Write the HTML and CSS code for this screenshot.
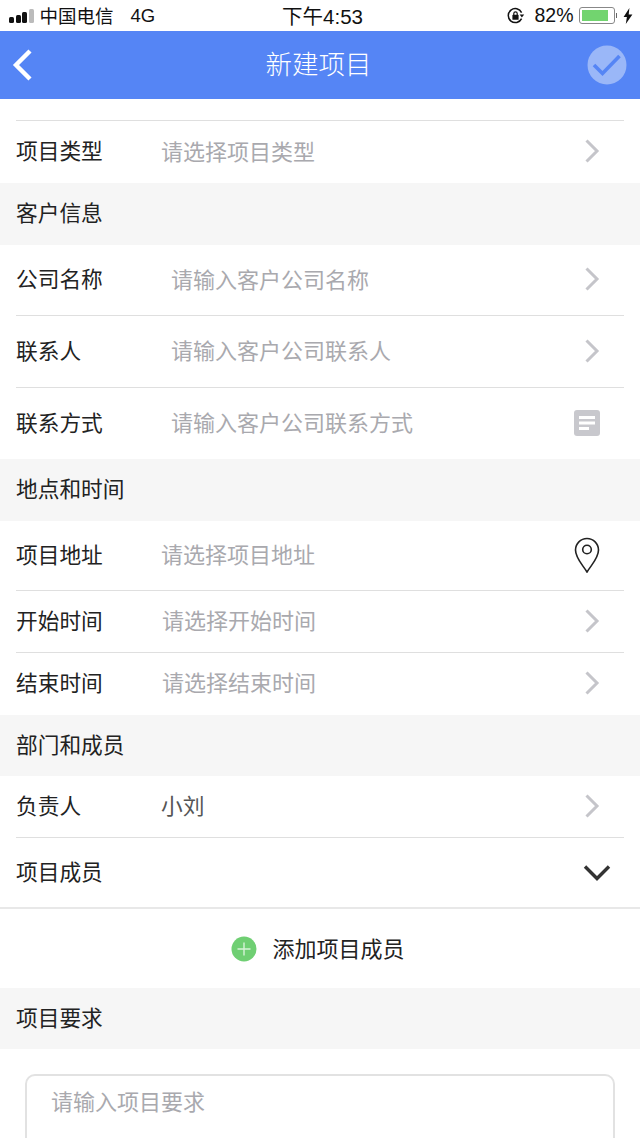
FILE: index.html
```html
<!DOCTYPE html>
<html lang="zh-CN">
	<head>
		<title>新建项目</title>
		<meta charset="UTF-8">
		<meta content="width=device-width,initial-scale=1.0" name="viewport">
		<link rel="stylesheet" href="styles.css">
	</head>
	<body>
		<div class="phone">
			<div class="statusBar">
				<div class="statusLeft">
					<span class="signal"><i class="s1"></i><i class="s2"></i><i class="s3"></i><i class="s4"></i></span>
					<span class="carrier">中国电信</span>
					<span class="net">4G</span>
				</div>
				<div class="statusTime">下午4:53</div>
				<div class="statusRight">
					<svg class="lockIcon" viewBox="0 0 18 18" width="18" height="18"><path d="M14.6 11.6A7 7 0 1 1 14.6 5.6" fill="none" stroke="#111" stroke-width="1.5"/><path d="M12.6 7.6h4.6l-2.3 2.8z" fill="#111"/><rect x="5.4" y="7.8" width="6.2" height="5" rx="0.6" fill="#111"/><path d="M6.8 8V6.6a1.7 1.7 0 0 1 3.4 0V8" fill="none" stroke="#111" stroke-width="1.2"/></svg>
					<span class="pct">82%</span>
					<span class="battery"><span class="batteryFill"></span></span>
					<span class="batteryTip"></span>
					<svg class="boltIcon" viewBox="0 0 10 16" width="10" height="16"><path d="M6.4 0 0.6 9h3.3L2.8 16 9.4 6.4H5.7z" fill="#111"/></svg>
				</div>
			</div>

			<div class="header">
				<svg class="backIcon" viewBox="0 0 24 36" width="24" height="36"><path d="M19 4 5 18l14 14" fill="none" stroke="#fff" stroke-width="4.4"/></svg>
				<div class="headerTitle">新建项目</div>
				<svg class="okIcon" viewBox="0 0 40 40" width="40" height="40"><circle cx="20" cy="20" r="19.5" fill="#9ab7f8"/><path d="M7 20l8.500 8.500L32.500 11" fill="none" stroke="#5585f5" stroke-width="3.600"/></svg>
			</div>

			<div class="topGap"></div>
			<div class="row rowH61 firstRow">
				<span class="label">项目类型</span>
				<span class="value hint">请选择项目类型</span>
				<svg class="arrow" viewBox="0 0 16 26" width="16" height="26"><path d="M2.5 2.5 13 13 2.5 23.500" fill="none" stroke="#c5c5ca" stroke-width="3"/></svg>
			</div>

			<div class="section">客户信息</div>
			<div class="row rowLine rowH71">
				<span class="label">公司名称</span>
				<span class="value hint wide">请输入客户公司名称</span>
				<svg class="arrow" viewBox="0 0 16 26" width="16" height="26"><path d="M2.5 2.5 13 13 2.5 23.500" fill="none" stroke="#c5c5ca" stroke-width="3"/></svg>
			</div>
			<div class="row rowLine rowH71">
				<span class="label">联系人</span>
				<span class="value hint wide">请输入客户公司联系人</span>
				<svg class="arrow" viewBox="0 0 16 26" width="16" height="26"><path d="M2.5 2.5 13 13 2.5 23.500" fill="none" stroke="#c5c5ca" stroke-width="3"/></svg>
			</div>
			<div class="row rowH71">
				<span class="label">联系方式</span>
				<span class="value hint wide">请输入客户公司联系方式</span>
				<svg class="noteIcon" viewBox="0 0 26 26" width="26" height="26"><rect width="26" height="26" rx="3" fill="#c8c8cd"/><path d="M5 7.500h16M5 13h16M5 18.500h10" stroke="#fff" stroke-width="3"/></svg>
			</div>

			<div class="section">地点和时间</div>
			<div class="row rowLine rowH70">
				<span class="label">项目地址</span>
				<span class="value hint">请选择项目地址</span>
				<svg class="pinIcon" viewBox="0 0 26 36" width="26" height="36"><path d="M13 35C8 27 1.500 21 1.500 13a11.500 11.500 0 0 1 23 0C24.500 21 18 27 13 35z" fill="none" stroke="#222" stroke-width="1.600"/><circle cx="13" cy="12.500" r="4.300" fill="none" stroke="#222" stroke-width="1.600"/></svg>
			</div>
			<div class="row rowLine rowH62">
				<span class="label">开始时间</span>
				<span class="value hint shift">请选择开始时间</span>
				<svg class="arrow" viewBox="0 0 16 26" width="16" height="26"><path d="M2.5 2.5 13 13 2.5 23.500" fill="none" stroke="#c5c5ca" stroke-width="3"/></svg>
			</div>
			<div class="row rowH62">
				<span class="label">结束时间</span>
				<span class="value hint shift">请选择结束时间</span>
				<svg class="arrow" viewBox="0 0 16 26" width="16" height="26"><path d="M2.5 2.5 13 13 2.5 23.500" fill="none" stroke="#c5c5ca" stroke-width="3"/></svg>
			</div>

			<div class="section">部门和成员</div>
			<div class="row rowLine rowH62">
				<span class="label">负责人</span>
				<span class="value filled">小刘</span>
				<svg class="arrow" viewBox="0 0 16 26" width="16" height="26"><path d="M2.5 2.5 13 13 2.5 23.500" fill="none" stroke="#c5c5ca" stroke-width="3"/></svg>
			</div>
			<div class="row rowFull">
				<span class="label">项目成员</span>
				<svg class="chevronDown" viewBox="0 0 28 18" width="28" height="18"><path d="M2 2.500 14 14.500 26 2.500" fill="none" stroke="#333" stroke-width="3.400"/></svg>
			</div>
			<div class="addRow">
				<svg class="plusIcon" viewBox="0 0 26 26" width="26" height="26"><circle cx="13" cy="13" r="12.500" fill="#6fcf73"/><path d="M13 6.500v13M6.500 13h13" stroke="#d6f3d7" stroke-width="1.400"/></svg>
				<span class="addText">添加项目成员</span>
			</div>

			<div class="section lastSection">项目要求</div>
			<div class="reqWrap">
				<div class="reqBox">请输入项目要求</div>
			</div>
		</div>
	</body>
</html>
```

FILE: styles.css
```css
html,body{margin:0;padding:0;background:#fff;}
body{font-family:"Noto Sans CJK SC","Liberation Sans",sans-serif;color:#222;}
.phone{width:640px;height:1138px;overflow:hidden;}

.statusBar{height:31px;display:flex;align-items:center;justify-content:space-between;font-family:"Liberation Sans","Noto Sans CJK SC",sans-serif;font-size:18.500px;color:#111;padding:0 7px 0 9px;box-sizing:border-box;}
.statusLeft{display:flex;align-items:center;width:200px;}
.signal{display:flex;align-items:flex-end;gap:1.500px;margin-right:6px;}
.signal i{display:block;width:5px;background:#111;border-radius:1.500px;}
.signal .s1{height:6px;}
.signal .s2{height:8px;}
.signal .s3{height:11px;}
.signal .s4{height:14px;background:#bbb;}
.carrier{margin-bottom:1px;}
.net{margin-left:17px;}
.statusTime{font-size:20.500px;margin:0 0 1px 3px;}
.statusRight{display:flex;align-items:center;width:200px;justify-content:flex-end;}
.lockIcon{margin-right:9px;}
.pct{font-size:19.500px;margin-right:5px;}
.battery{display:block;width:36px;height:17px;border:1px solid #888;border-radius:3px;padding:2px;box-sizing:border-box;}
.batteryFill{display:block;width:26px;height:100%;background:#72d46f;}
.batteryTip{display:block;width:1.500px;height:5px;background:#666;margin:0 6px 0 1px;}

.header{height:68px;background:#5585f5;display:flex;align-items:center;justify-content:space-between;padding:0 13px 0 11px;}
.headerTitle{font-size:26.500px;line-height:36px;color:#fff;font-weight:300;margin:0 0 5px 15px;}

.topGap{height:21px;}
.row{display:flex;align-items:center;padding:0 16px;box-sizing:border-box;position:relative;font-size:21.700px;}
.rowLine::after{content:"";position:absolute;left:16px;right:16px;bottom:0;height:1px;background:#dfdfdf;}
.firstRow{border-top:1px solid #dfdfdf;margin:0 16px;padding:0;}
.rowH61{height:63px;}
.rowH70{height:70px;}
.rowH71{height:71.670px;}
.rowH62{height:62px;}
.rowFull{height:71px;border-bottom:2px solid #e8e8e8;justify-content:space-between;padding-right:29px;}

.label{width:145px;flex:none;color:#222;margin-bottom:5px;}
.value{flex:1;margin-bottom:5px;}
.hint{color:#a9a9ae;font-size:22px;}
.wide{padding-left:10px;}
.shift{padding-left:1px;}
.filled{color:#555;}
.arrow{margin:0 24px 2px 0;}
.noteIcon{margin:0 24px 1px 0;}
.pinIcon{margin:0 24px 2px 0;}

.section{height:61.500px;background:#f6f6f6;display:flex;align-items:center;padding:0 0 5px 16px;box-sizing:border-box;font-size:21.700px;color:#222;}
.lastSection{height:61px;}

.addRow{height:79px;display:flex;align-items:center;justify-content:center;}
.plusIcon{margin:0 15px 0 -4px;}
.addText{font-size:22px;color:#222;margin-bottom:3px;}

.reqWrap{padding:24.500px 25px 0;}
.reqBox{height:120px;border:2px solid #e2e2e2;border-radius:10px;box-sizing:border-box;padding:8px 24px;font-size:22px;color:#a9a9ae;}
```
